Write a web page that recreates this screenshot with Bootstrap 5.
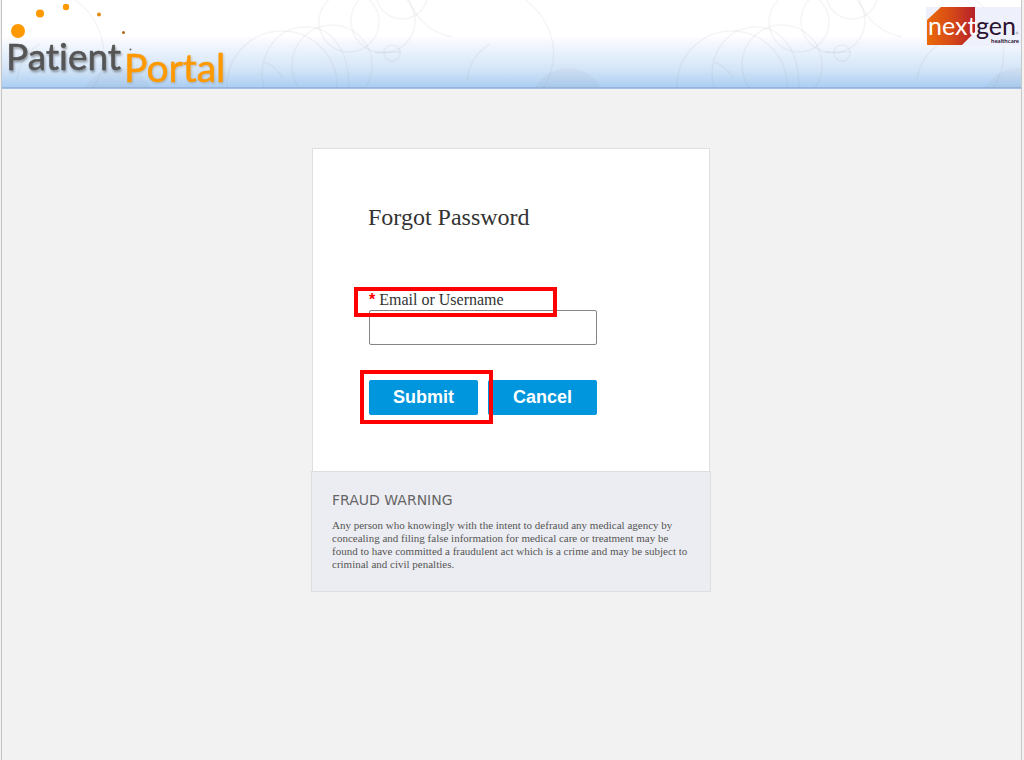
<!DOCTYPE html>
<html lang="en">
<head>
<meta charset="utf-8">
<meta name="viewport" content="width=device-width, initial-scale=1">
<title>Patient Portal - Forgot Password</title>
<link href="https://cdn.jsdelivr.net/npm/bootstrap@5.3.0/dist/css/bootstrap.min.css" rel="stylesheet">
<style>
  body { background: #f2f2f2; font-family: "Liberation Serif", "Times New Roman", serif; color: #333; }
  .page-frame { border-left: 1px solid #c4c4c4; border-right: 1px solid #c8c8c8; margin: 0 2px 0 1px; }
  .portal-header { height: 89px; border-bottom: 1px solid #a4c0e4;
    background: linear-gradient(#fff 0, #fff 36px, #f6f8fe 42px, #e6f0fc 54px, #d3e4f7 70px, #abcef3 87px, #98b4dc 87px); }
  .brand-logo { width: 230px; height: 87px; overflow: visible; font-variant-ligatures: none; }
  .vendor-logo { width: 95px; height: 39px; margin-top: 7px; overflow: visible; }
  .portal-main { padding: 59px 1px 0 0; }
  .login-panel { width: 400px; max-width: 100%; }
  .form-area { margin: 0 1px; border: 1px solid #dfdfdf; border-bottom: 0; background: #fff; padding: 54px 56px 56px 55px; }
  .form-title { font-size: 24px; line-height: 28px; margin-bottom: 56px; font-weight: 400; color: #333; }
  .field-label { font-size: 16px; line-height: 20px; padding-top: 3px; }
  .required-star { color: #f00; font: bold 16px/20px "Liberation Sans", Arial, sans-serif; }
  .form-fields { width: 228px; max-width: 100%; margin-left: 1px; }
  .user-input { height: 35px; border: 1px solid #858585; border-radius: 2px; }
  .btn-portal { background: #0096dd; color: #fff; height: 35px; border: 0; border-radius: 2px; padding: 0;
    font: bold 18px/35px "Liberation Sans", Arial, sans-serif; }
  .btn-portal:hover { background: #0083c2; color: #fff; }
  .button-row { margin-top: 35px; gap: 10px; }
  .callout-box { position: absolute; border: 4px solid #f00; pointer-events: none; z-index: 2; }
  .callout-label { left: -15px; top: 0; width: 203px; height: 30px; }
  .callout-submit { left: -9px; top: -10px; right: -15px; bottom: -9px; }
  .fraud-area { background: #ecedf2; border: 1px solid #dcdfdf; padding: 19px 20px 20px; color: #555; }
  .fraud-title { font: 14px/18px "DejaVu Sans", Verdana, sans-serif; color: #666; margin-bottom: 10px; }
  .fraud-text { font-size: 11px; line-height: 13px; margin-bottom: 0; }
</style>
</head>
<body>
<div class="page-frame min-vh-100">
  <header class="portal-header position-relative d-flex justify-content-between">
    <svg class="position-absolute top-0 start-0 w-100 h-100" aria-hidden="true">
      <defs>
        <g id="rings" fill="none" stroke="#8f8f9c" stroke-opacity=".09" stroke-width="1.500">
          <circle cx="280" cy="86" r="55"/>
          <circle cx="330" cy="65" r="40"/>
          <path d="M262 88C254 56 274 27 304 27C330 27 347 50 347 88M262 62Q274 66 281 78"/>
          <circle cx="347" cy="22" r="30"/>
          <circle cx="381" cy="21" r="32"/>
          <circle cx="400" cy="-7" r="26"/>
          <path d="M407 0C414 20 430 33 450 37M373 52H399"/>
          <circle cx="390" cy="53" r="8"/>
          <path d="M523 0C546 16 554 42 551 62Q549 76 541 88M465 80Q468 56 488 44"/>
          <circle cx="566" cy="106" r="38" stroke="none" fill="#8f8f9c" fill-opacity=".07"/>
        </g>
      </defs>
      <use href="#rings" x="-450"/>
      <use href="#rings"/>
      <use href="#rings" x="450"/>
    </svg>
    <svg class="brand-logo position-relative" viewBox="2 0 230 87" role="img" aria-label="Patient Portal">
      <g fill="#f90">
        <circle cx="18" cy="31" r="7"/><circle cx="40" cy="13.500" r="4"/><circle cx="66" cy="7" r="3.200"/>
        <circle cx="99" cy="14.500" r="2" fill="#e08a10"/><circle cx="123.500" cy="32.500" r="1.500" fill="#b06a1c"/>
        <circle cx="130.500" cy="49.500" r="1" fill="#666"/>
      </g>
      <g font-family="Lato, 'Open Sans', sans-serif">
        <g style="filter:drop-shadow(1px 2px 1px rgba(0,0,0,.35))"><text x="6" y="70" font-size="37" fill="#555" stroke="#555" stroke-width=".5">Patient</text></g>
        <g style="filter:drop-shadow(1px 1px 1px rgba(120,90,40,.3))"><text x="124" y="82" font-size="39" fill="#f90" stroke="#f90" stroke-width=".5">Portal</text></g>
      </g>
    </svg>
    <svg class="vendor-logo position-relative" viewBox="0 0 95 39" role="img" aria-label="NextGen Healthcare">
      <defs><linearGradient id="ember"><stop offset="0" stop-color="#ea6a0a"/><stop offset=".5" stop-color="#d64a17"/><stop offset="1" stop-color="#b5202a"/></linearGradient></defs>
      <path fill="#eef1fb" d="M0 0H95V39H0z"/>
      <path fill="url(#ember)" d="M15 0H49V25L36 38H1V13z"/>
      <g font-family="Lato, 'Open Sans', sans-serif">
        <text x="2" y="28" font-size="25" fill="#fff">next</text>
        <text x="50" y="28" font-size="25" fill="#2d1230">gen</text>
        <text x="65" y="36" font-size="6" font-weight="700" fill="#2d1230">healthcare</text>
      </g>
      <circle cx="91" cy="26" r="1" fill="none" stroke="#777" stroke-width=".5"/>
    </svg>
  </header>

  <main class="portal-main">
    <div class="login-panel mx-auto">
      <form class="form-area" onsubmit="return false">
        <h1 class="form-title">Forgot Password</h1>
        <div class="form-fields">
          <div class="position-relative">
            <label class="field-label d-block" for="username"><span class="required-star">*</span> Email or Username</label>
            <span class="callout-box callout-label"></span>
            <input class="form-control user-input" type="text" id="username" required>
          </div>
          <div class="button-row d-flex">
            <div class="position-relative flex-fill w-50">
              <button class="btn btn-portal w-100" type="submit">Submit</button>
              <span class="callout-box callout-submit"></span>
            </div>
            <div class="flex-fill w-50"><button class="btn btn-portal w-100" type="button">Cancel</button></div>
          </div>
        </div>
      </form>
      <section class="fraud-area">
        <h2 class="fraud-title">FRAUD WARNING</h2>
        <p class="fraud-text">Any person who knowingly with the intent to defraud any medical agency by concealing and filing false information for medical care or treatment may be found to have committed a fraudulent act which is a crime and may be subject to criminal and civil penalties.</p>
      </section>
    </div>
  </main>
</div>
<script src="https://cdn.jsdelivr.net/npm/bootstrap@5.3.0/dist/js/bootstrap.bundle.min.js"></script>
</body>
</html>
